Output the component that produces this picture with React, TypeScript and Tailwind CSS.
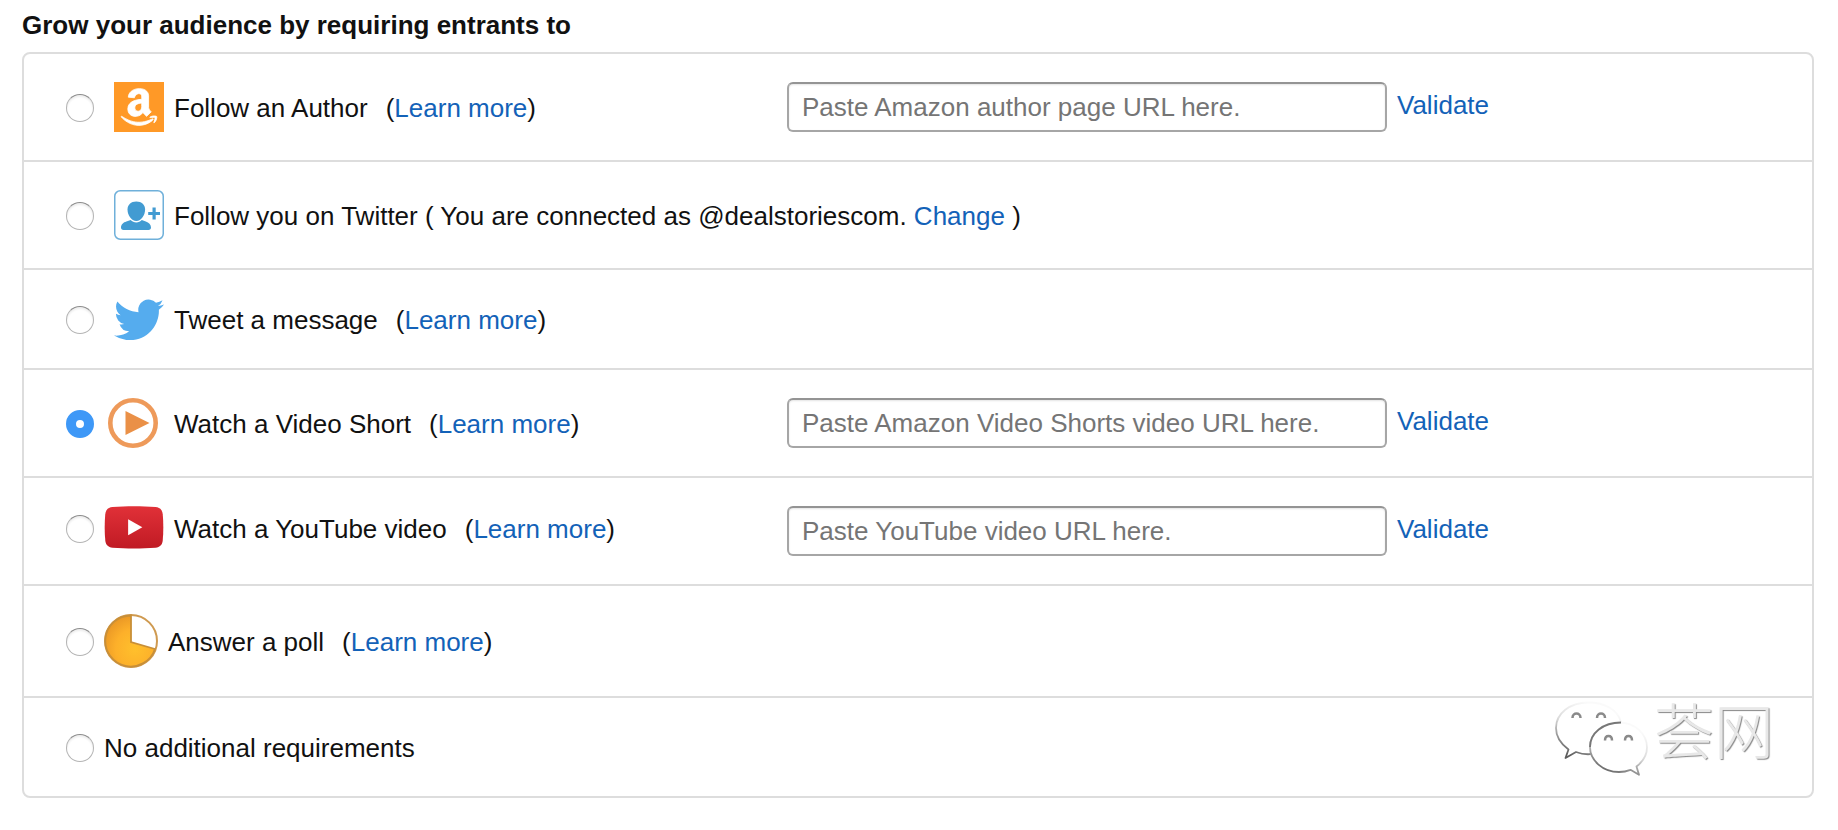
import { useState, type ReactNode } from 'react';
import { FaAmazon } from 'react-icons/fa';

type Requirement = {
  id: string;
  icon?: ReactNode;
  title: string;
  action?: string;
  placeholder?: string;
};

function AmazonIcon() {
  return (
    <span className="ml-2.5 flex size-[50px] items-center justify-center bg-[#ff9927] text-white">
      <FaAmazon size={42} stroke="currentColor" strokeWidth={10} />
    </span>
  );
}

function FollowIcon() {
  return (
    <svg className="ml-2.5" width="50" height="50" viewBox="0 0 50 50">
      <rect x="0.75" y="0.75" width="48.5" height="48.5" rx="5.5" fill="#fff" stroke="#6fb0da" strokeWidth="1.5" />
      <g fill="#429bd2">
        <path d="M22.3 11.500c5.400 0 8.800 3.400 8.800 8 0 5.600-3.800 11.500-8.800 11.500s-8.800-5.900-8.800-11.500c0-4.600 3.400-8 8.800-8z" />
        <path d="M7 37.600c0-3.400 2.400-5.300 5.400-6.200l4.300-1.300c1.500 1.600 3.400 2.500 5.600 2.500s4.100-.9 5.500-2.500l4 1.300c3 .9 5.200 2.900 5.200 6.200 0 1.600-.9 2.400-2.500 2.400H9.500C7.900 40 7 39.200 7 37.600z" />
        <path d="M38.500 17.500h3.200v4.500h4.300v3h-4.300v4.500h-3.200v-4.500h-4.300v-3h4.300z" />
      </g>
    </svg>
  );
}

function TweetIcon() {
  return (
    <svg className="ml-2.5" width="50" height="42" viewBox="0 1.5 24 20.16" fill="#55acee">
      <path d="M23.953 4.57a10 10 0 01-2.825.775 4.958 4.958 0 002.163-2.723c-.951.555-2.005.959-3.127 1.184a4.92 4.92 0 00-8.384 4.482C7.69 8.095 4.067 6.13 1.64 3.162a4.822 4.822 0 00-.666 2.475c0 1.71.87 3.213 2.188 4.096a4.904 4.904 0 01-2.228-.616v.06a4.923 4.923 0 003.946 4.827 4.996 4.996 0 01-2.212.085 4.936 4.936 0 004.604 3.417 9.867 9.867 0 01-6.102 2.105c-.39 0-.779-.023-1.17-.067a13.995 13.995 0 007.557 2.209c9.053 0 13.998-7.496 13.998-13.985 0-.21 0-.42-.015-.63A9.935 9.935 0 0024 4.59z" />
    </svg>
  );
}

function VideoShortIcon() {
  return (
    <svg className="mr-1.5 ml-1" width="50" height="50" viewBox="0 0 50 50">
      <circle cx="25" cy="25" r="22.700" fill="#fff" stroke="#ee9a5a" strokeWidth="4.600" />
      <path d="M17.500 13v24L41.500 25z" fill="#ea9047" />
    </svg>
  );
}

function YouTubeIcon() {
  return (
    <svg width="60" height="43" viewBox="0 0 60 44">
      <defs>
        <linearGradient id="yt" x1="0" y1="0" x2="0" y2="1">
          <stop offset="0" stopColor="#e13138" />
          <stop offset="1" stopColor="#c01a24" />
        </linearGradient>
      </defs>
      <path
        d="M8 1C22-.1 38-.1 52 1c4.500.4 7 3 7.400 7.400.8 9 .8 18 0 27-.4 4.400-2.900 6.900-7.400 7.300-14 1.100-30 1.100-44 0-4.500-.4-7-2.900-7.400-7.300-.8-9-.8-18 0-27C1 4 3.500 1.400 8 1z"
        fill="url(#yt)"
      />
      <path d="M24 13.500v16.500l14.500-8.200z" fill="#fff" />
    </svg>
  );
}

function PollIcon() {
  return (
    <svg width="54" height="54" viewBox="0 0 54 54">
      <defs>
        <radialGradient id="pie" cx="0.6" cy="0.65" r="0.65">
          <stop offset="0" stopColor="#ffc02c" />
          <stop offset="0.6" stopColor="#fdb02a" />
          <stop offset="1" stopColor="#ec9a26" />
        </radialGradient>
      </defs>
      <circle cx="27" cy="27" r="26" fill="#fff" stroke="#cf9a50" strokeWidth="2" />
      <path d="M27 28V1.500A25.500 25.500 0 1 0 51 35z" fill="url(#pie)" stroke="#c88f38" strokeWidth="1.800" />
    </svg>
  );
}

const requirements: Requirement[] = [
  { id: 'author', icon: <AmazonIcon />, title: 'Follow an Author', placeholder: 'Paste Amazon author page URL here.' },
  {
    id: 'twitter',
    icon: <FollowIcon />,
    title: 'Follow you on Twitter ( You are connected as @dealstoriescom. ',
    action: 'Change',
  },
  { id: 'tweet', icon: <TweetIcon />, title: 'Tweet a message' },
  { id: 'short', icon: <VideoShortIcon />, title: 'Watch a Video Short', placeholder: 'Paste Amazon Video Shorts video URL here.' },
  { id: 'youtube', icon: <YouTubeIcon />, title: 'Watch a YouTube video', placeholder: 'Paste YouTube video URL here.' },
  { id: 'poll', icon: <PollIcon />, title: 'Answer a poll' },
  { id: 'none', title: 'No additional requirements' },
];

function Watermark() {
  return (
    <div className="pointer-events-none absolute right-10 bottom-[18px] flex items-start gap-1" aria-hidden="true">
      <svg width="96" height="80" viewBox="0 0 96 80" fill="#fff" strokeLinejoin="round">
        <defs>
          <linearGradient id="edge" x1="0.7" y1="0.1" x2="0.3" y2="1">
            <stop offset="0" stopColor="#fafafa" />
            <stop offset="0.45" stopColor="#dadada" />
            <stop offset="1" stopColor="#5c5c5c" />
          </linearGradient>
        </defs>
        <path
          d="M34 2.500C16 2.500 2 13.500 2 28c0 9 5 16 12.500 21.500L11.500 58l10.500-6c4 1.500 9 2.500 14 2.200L67 22C64 10 51 2.500 34 2.500z"
          stroke="url(#edge)"
          strokeWidth="1.800"
        />
        <path
          d="M65 22.500c-16 0-29 11-29 24.500s13 25 29 25c4 0 8-.8 11.500-2.200l8.500 5-2.500-8.300C89 61.500 93 55 93 47.500c0-13.500-12-25-28-25z"
          stroke="url(#edge)"
          strokeWidth="1.800"
        />
        <path d="M36 47c0-14 13-24.500 31-24.500" fill="none" stroke="#777" strokeWidth="1.800" />
        <g fill="none" stroke="#8a8a8a" strokeWidth="2.500">
          <path d="M18.500 18c0-6 8-6 8 0" />
          <path d="M43 18c0-6 8-6 8 0" />
          <path d="M51 40.500c0-6 7-6 7 0" />
          <path d="M71 40.500c0-6 7-6 7 0" />
        </g>
      </svg>
      <span className="font-['Liberation_Sans','Noto_Sans_CJK_SC',sans-serif] text-[60px] leading-[68px] font-light text-[#e8e8e8] [text-shadow:1px_1px_1px_#888]">
        荟网
      </span>
    </div>
  );
}

export default function App() {
  const [selected, setSelected] = useState('short');

  return (
    <main className="min-h-screen bg-white pt-2.5 pr-6 pb-8 pl-[22px] font-['Liberation_Sans',Arial,sans-serif] text-[26px] leading-[30px] text-[#111]">
      <h1 className="mb-3 font-bold">Grow your audience by requiring entrants to</h1>

      <div className="relative">
        <div className="divide-y-2 divide-[#ddd] rounded-lg border-2 border-[#ddd]">
          {requirements.map((item) => (
            <div key={item.id} className="flex items-start py-7 pl-[42px]">
              <div className={item.placeholder ? 'flex min-h-[42px] w-[721px] items-center' : 'flex min-h-[42px] items-center'}>
                <input
                  id={item.id}
                  type="radio"
                  name="requirement"
                  checked={selected === item.id}
                  onChange={() => setSelected(item.id)}
                  className="mt-0.5 mr-2.5 size-7 shrink-0 appearance-none rounded-full border border-[#b4b4b4] border-t-[#8c8c8c] bg-white shadow-[inset_0_2px_2px_#eee] checked:border-[10px] checked:border-[#3e98f7] checked:shadow-none"
                />
                {item.icon && <span className="mr-2.5 flex shrink-0">{item.icon}</span>}
                <p className="pt-0.5 whitespace-pre">
                  <label htmlFor={item.id}>{item.title}</label>
                  {item.action && (
                    <>
                      <a href="#" className="text-[#1362b8]">{item.action}</a>
                      {' )'}
                    </>
                  )}
                  {item.icon && !item.action && (
                    <span className="ml-[18px]">
                      (<a href="#" className="text-[#1362b8]">Learn more</a>)
                    </span>
                  )}
                </p>
              </div>

              {item.placeholder && (
                <div className="flex items-start gap-2.5">
                  <input
                    type="text"
                    aria-label={item.title}
                    placeholder={item.placeholder}
                    className="h-[50px] w-[600px] rounded-md border-2 border-[#a6a6a6] border-t-[#949494] bg-white px-[13px] shadow-[inset_0_1px_2px_#e4e4e4] placeholder:text-[#757575]"
                  />
                  <a href="#" className="mt-2 text-[#1362b8]">Validate</a>
                </div>
              )}
            </div>
          ))}
        </div>
        <Watermark />
      </div>
    </main>
  );
}
